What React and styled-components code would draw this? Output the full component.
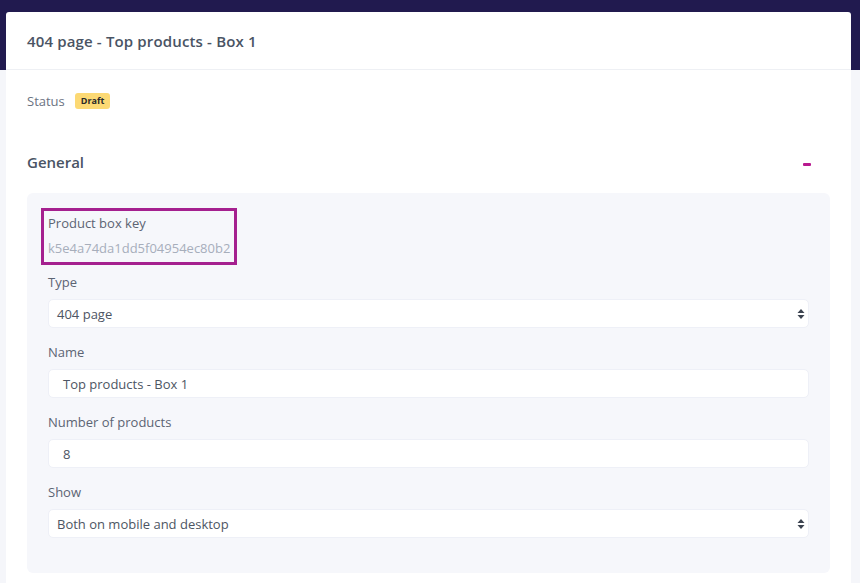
import React from 'react'
import styled, { createGlobalStyle } from 'styled-components'

const GlobalStyle = createGlobalStyle`
  html, body {
    margin: 0;
    padding: 0;
    height: 100%;
    overflow: hidden;
  }
  body {
    font-family: "Open Sans", "Liberation Sans", sans-serif;
    background: #f5f6fa;
  }
`

const Page = styled.div`
  min-height: 583px;
  padding: 12px 9px 0 6px;
  background: linear-gradient(to bottom, #211a4f 0, #211a4f 70px, #f5f6fa 70px);
  box-sizing: border-box;
`

const Card = styled.div`
  background: #fff;
  border-radius: 3px 3px 0 0;
  min-height: 571px;
`

const CardHeader = styled.div`
  height: 58px;
  display: flex;
  align-items: center;
  padding: 0 21px;
  border-bottom: 1px solid #eef0f4;
  box-sizing: border-box;
`

const Title = styled.h1`
  margin: 0;
  font-size: 15px;
  font-weight: 600;
  color: #4a5464;
  letter-spacing: 0.15px;
`

const CardBody = styled.div`
  padding: 22px 21px 0 21px;
`

const StatusRow = styled.div`
  display: flex;
  align-items: center;
  gap: 10px;
  font-size: 13px;
  color: #6b7382;
`

const Badge = styled.span`
  background: #fcd974;
  color: #2a2a2a;
  font-size: 9px;
  font-weight: 700;
  padding: 2px 6px;
  border-radius: 3px;
  line-height: 12px;
`

const SectionHead = styled.div`
  display: flex;
  align-items: center;
  justify-content: space-between;
  margin-top: 40px;
  padding-right: 19px;
  height: 24px;
`

const SectionTitle = styled.h2`
  margin: 0;
  font-size: 15px;
  font-weight: 600;
  color: #4a5464;
`

const Collapse = styled.span`
  width: 8px;
  height: 3px;
  background: #b8198f;
  border-radius: 1px;
  margin-top: 4px;
`

const Panel = styled.div`
  margin-top: 19px;
  background: #f6f7fb;
  border-radius: 6px;
  padding: 15px 21px 35px 21px;
`

const KeyBox = styled.div`
  display: inline-flex;
  flex-direction: column;
  border: 3px solid #a5208f;
  padding: 3px 4px 5px 4px;
  margin-left: -7px;
  gap: 7px;
`

const Label = styled.div`
  font-size: 13px;
  color: #5c6473;
  line-height: 18px;
  margin-bottom: ${p => (p.$tight ? 0 : '8px')};
`

const KeyValue = styled.div`
  font-size: 13px;
  color: #a7aebb;
  line-height: 18px;
`

const Field = styled.div`
  margin-top: ${p => p.$first ? '8px' : '15px'};
`

const Control = styled.div`
  height: 29px;
  background: #fff;
  border: 1px solid #eef0f7;
  border-radius: 5px;
  box-sizing: border-box;
  display: flex;
  align-items: center;
  justify-content: space-between;
  padding: 0 3px 0 ${p => (p.$select ? '8px' : '14px')};
  font-size: 13px;
  color: #4d5563;
`

const Arrows = () => (
  <svg width="8" height="12" viewBox="0 0 8 12">
    <path d="M4 1 L7.5 5 H0.5 Z" fill="#3c4350" />
    <path d="M4 11 L7.5 7 H0.5 Z" fill="#3c4350" />
  </svg>
)

function App() {
  return (
    <>
      <GlobalStyle />
      <Page>
        <Card>
          <CardHeader>
            <Title>404 page - Top products - Box 1</Title>
          </CardHeader>
          <CardBody>
            <StatusRow>
              Status <Badge>Draft</Badge>
            </StatusRow>
            <SectionHead>
              <SectionTitle>General</SectionTitle>
              <Collapse />
            </SectionHead>
            <Panel>
              <KeyBox>
                <Label $tight>Product box key</Label>
                <KeyValue>k5e4a74da1dd5f04954ec80b2</KeyValue>
              </KeyBox>
              <Field $first>
                <Label>Type</Label>
                <Control $select>404 page<Arrows /></Control>
              </Field>
              <Field>
                <Label>Name</Label>
                <Control>Top products - Box 1</Control>
              </Field>
              <Field>
                <Label>Number of products</Label>
                <Control>8</Control>
              </Field>
              <Field>
                <Label>Show</Label>
                <Control $select>Both on mobile and desktop<Arrows /></Control>
              </Field>
            </Panel>
          </CardBody>
        </Card>
      </Page>
    </>
  )
}

export default App
